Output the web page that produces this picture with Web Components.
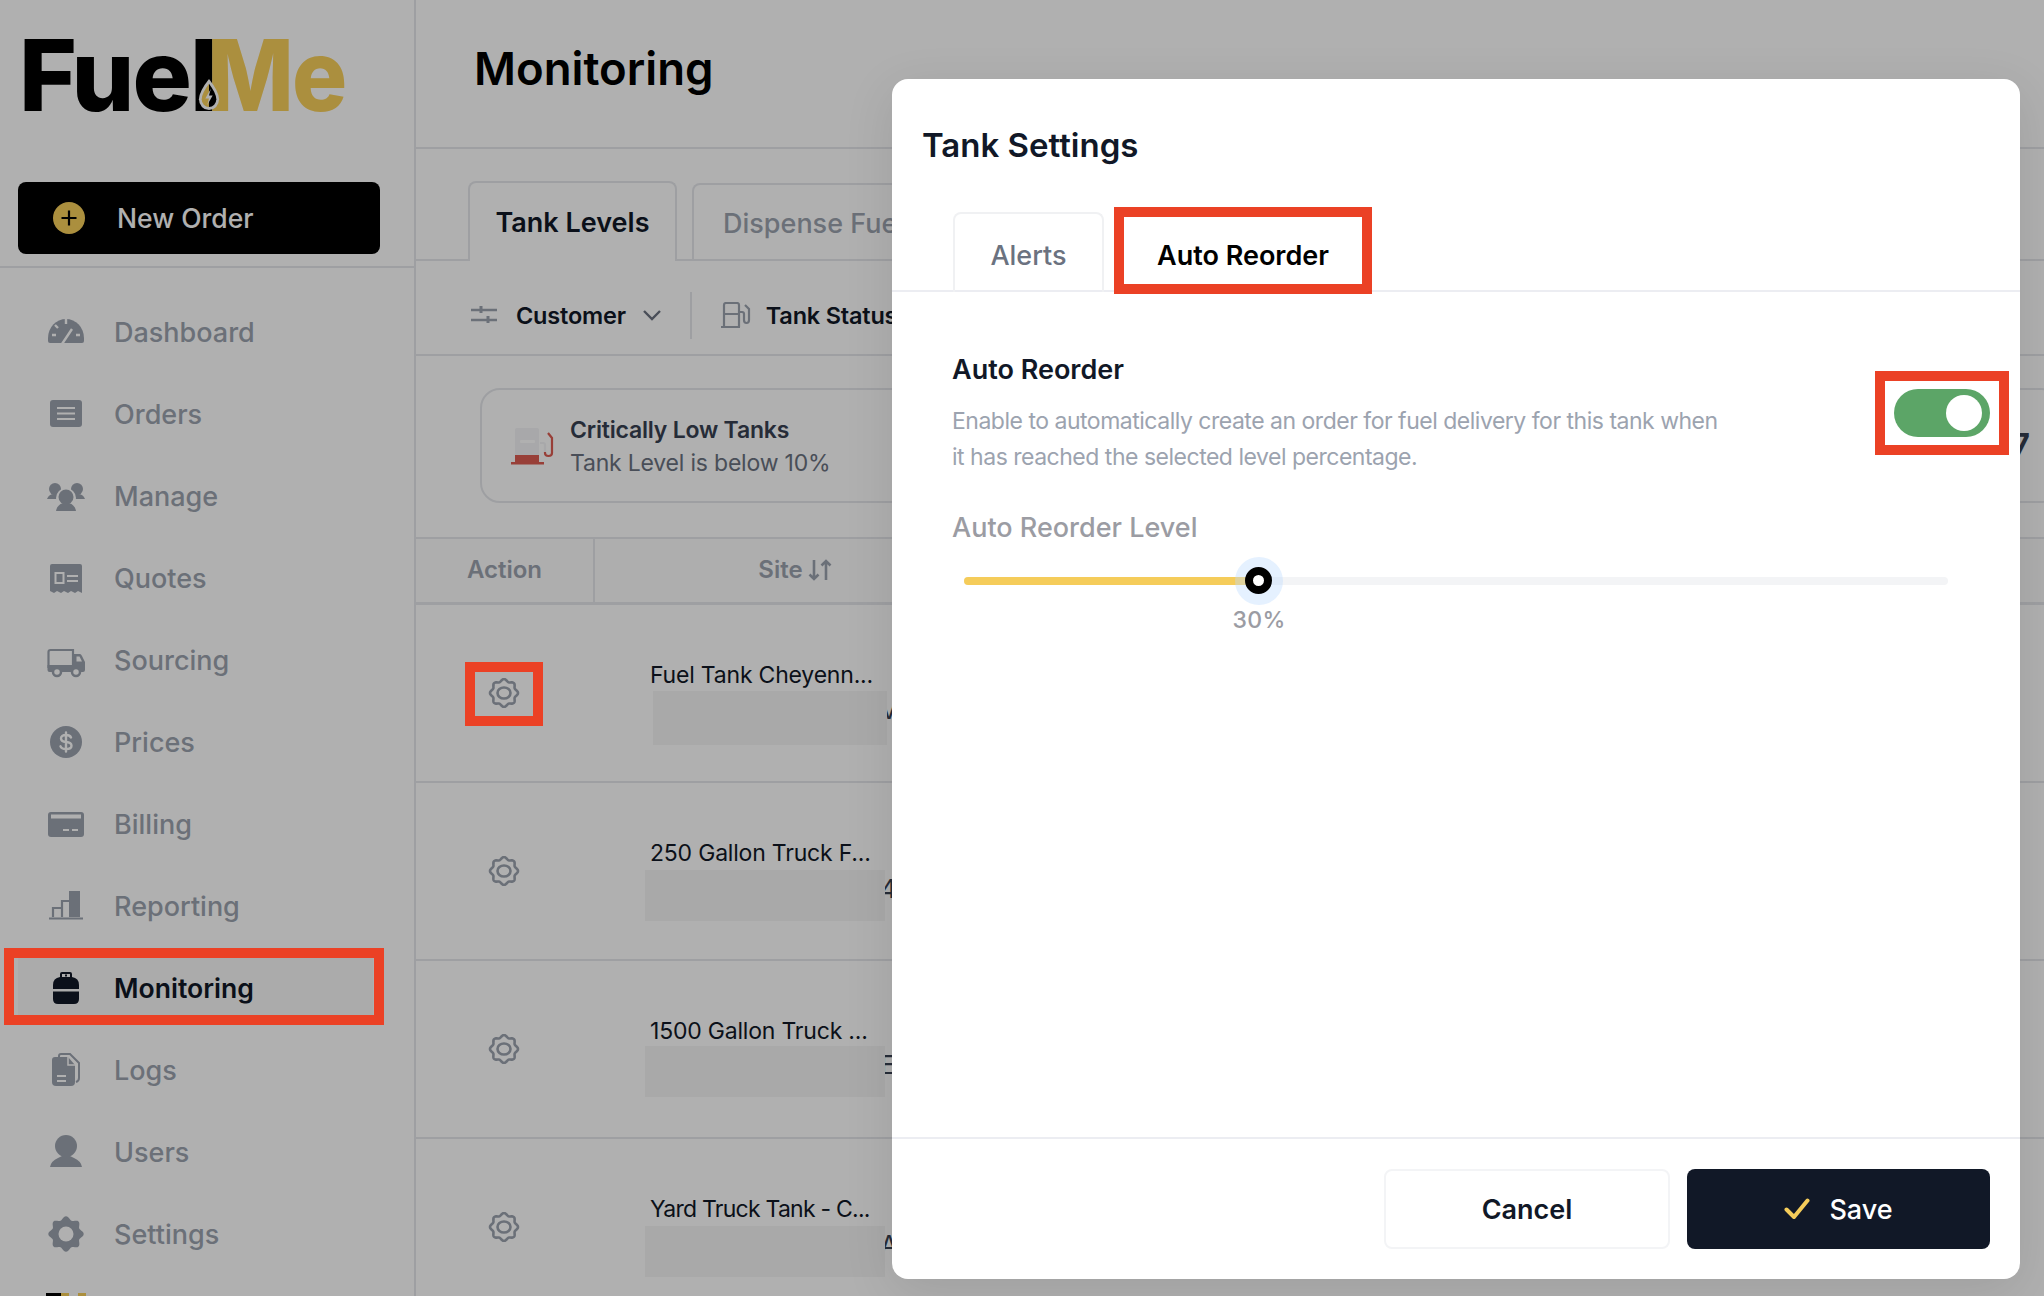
<!DOCTYPE html>
<html lang="en">
<head>
<meta charset="utf-8">
<title>Tank Settings</title>
<style>
    html, body { margin: 0; padding: 0; background: #fff; }
    body { font-family: Inter, "Liberation Sans", sans-serif; color: #111827; }
</style>
</head>
<body>
<fuel-app>
    <side-bar slot="side">
        <nav-item icon="dashboard">Dashboard</nav-item>
        <nav-item icon="orders">Orders</nav-item>
        <nav-item icon="manage">Manage</nav-item>
        <nav-item icon="quotes">Quotes</nav-item>
        <nav-item icon="sourcing">Sourcing</nav-item>
        <nav-item icon="prices">Prices</nav-item>
        <nav-item icon="billing">Billing</nav-item>
        <nav-item icon="reporting">Reporting</nav-item>
        <nav-item icon="monitoring" active>Monitoring</nav-item>
        <nav-item icon="logs">Logs</nav-item>
        <nav-item icon="users">Users</nav-item>
        <nav-item icon="settings">Settings</nav-item>
    </side-bar>

    <monitoring-page slot="main">
        <tank-row name="Fuel Tank Cheyenn..." peek="V" box-left="58" box-top="0" box-height="54" box-width="234"></tank-row>
        <tank-row name="250 Gallon Truck F..." peek="4" box-left="50" box-top="1" box-height="51" box-width="240"></tank-row>
        <tank-row name="1500 Gallon Truck ..." peek="E" box-left="50" box-top="-1" box-height="51" box-width="240"></tank-row>
        <tank-row name="Yard Truck Tank - C..." peek="A" tight box-left="50" box-top="1" box-height="51" box-width="240"></tank-row>
    </monitoring-page>

    <tank-settings slot="modal">
        <toggle-switch slot="toggle"></toggle-switch>
        <level-slider slot="slider" value="30"></level-slider>
    </tank-settings>

    <mark-box slot="marks" x="4" y="948" w="380" h="77"></mark-box>
    <mark-box slot="marks" x="465" y="662" w="78" h="64"></mark-box>
    <mark-box slot="marks" x="1114" y="207" w="258" h="87"></mark-box>
    <mark-box slot="marks" x="1875" y="371" w="134" h="84"></mark-box>
</fuel-app>

<script>
    // gear outline with wavy edge, the same shape is used in the table and in the nav
    function flowerPath(cx, cy, r, amp, lobes) {
        let d = '';
        for (let i = 0; i < 96; i++) {
            const t = i / 96 * Math.PI * 2;
            const rad = r + amp * Math.cos(lobes * t);
            d += (i ? 'L' : 'M') + (cx + rad * Math.cos(t)).toFixed(2) + ' ' + (cy + rad * Math.sin(t)).toFixed(2);
        }
        return d + 'Z';
    }

    // all nav icons sit in a 40x40 box, --cut is the colour of the row behind them
    const ICONS = {
        dashboard: `<path fill="currentColor" d="M2 26a18 19 0 0 1 36 0v3q0 2-2 2H4q-2 0-2-2z"/>
            <path stroke="var(--cut)" stroke-width="2.4" fill="none" d="M16 32l10-15M20 7v5M6 23h4M30 23h4M9 13l3 3"/>`,
        orders: `<rect x="4" y="6" width="32" height="27" rx="3" fill="currentColor"/>
            <path stroke="var(--cut)" stroke-width="2" d="M11 14h18M11 19.500h18M11 25h18"/>`,
        manage: `<g fill="currentColor">
            <circle cx="9" cy="13" r="6"/><circle cx="31" cy="13" r="6"/>
            <path d="M1 23q2-5 7-5h5v5zM39 23q-2-5-7-5h-5v5z"/></g>
            <circle cx="20" cy="22" r="10" fill="var(--cut)"/>
            <circle cx="20" cy="21" r="7.500" fill="currentColor"/>
            <path fill="currentColor" d="M10 35q1-6 7-8h6q6 2 7 8z"/>`,
        quotes: `<path fill="currentColor" d="M4 8q0-2 2-2h28q2 0 2 2v27l-4-2-3 2-4-2-3 2-4-2-3 2-4-2-3 2-4-2z"/>
            <rect x="9.500" y="15" width="8" height="10" fill="none" stroke="var(--cut)" stroke-width="2"/>
            <path stroke="var(--cut)" stroke-width="2" d="M21 18h11M21 23h11"/>`,
        sourcing: `<path fill="none" stroke="currentColor" stroke-width="2.200" d="M2.500 28V12q0-2 2-2H27v18"/>
            <path fill="currentColor" d="M1.500 25H39v5q0 2-2 2H3.500q-2 0-2-2zM28 14h6q1 0 2 2l3 6v4H28zM8 25"/>
            <path fill="var(--cut)" d="M30.500 16.500h3l2.500 5h-5.500z"/>
            <circle cx="11" cy="32" r="4" fill="var(--cut)" stroke="currentColor" stroke-width="2.500"/>
            <circle cx="30" cy="32" r="4" fill="var(--cut)" stroke="currentColor" stroke-width="2.500"/>`,
        prices: `<circle cx="20" cy="20" r="16" fill="currentColor"/>
            <path fill="none" stroke="var(--cut)" stroke-width="2.400" stroke-linecap="round" d="M25 15.500q-1-2.500-5-2.500-5 0-5 3.500 0 3 5 3.500 5.500.5 5.500 3.700 0 3.300-5.500 3.300-4.500 0-5.500-2.700M20 10.500v19"/>`,
        billing: `<rect x="2" y="8" width="36" height="25" rx="3" fill="currentColor"/>
            <rect x="5" y="10.500" width="30" height="4" fill="var(--cut)"/>
            <path stroke="var(--cut)" stroke-width="2" d="M17 26h6M26 26h6"/>`,
        reporting: `<rect x="23" y="5" width="11" height="26" fill="currentColor"/>
            <path fill="none" stroke="currentColor" stroke-width="2.200" d="M16 31V15h7M7 31V22h9M3 32.500h34"/>`,
        monitoring: `<path fill="currentColor" d="M7 17q0-7 7-8V6q0-2 2-2h8q2 0 2 2v3q7 1 7 8v14q0 5-5 5H12q-5 0-5-5z"/>
            <path fill="var(--cut)" d="M7 21h26v2.500H7zM16 6h8v3h-8z"/><path fill="currentColor" d="M19 6.500h2v2h-2z"/>`,
        logs: `<path fill="none" stroke="currentColor" stroke-width="2" d="M13 7V6q0-2 2-2h9l9 9v15q0 3-3 4"/>
            <path fill="currentColor" d="M9 7h13l7 8v17q0 4-4 4H10q-4 0-4-4V10q0-3 3-3z"/>
            <path stroke="var(--cut)" stroke-width="2" d="M11 26h9M11 31h9"/>
            <path fill="none" stroke="var(--cut)" stroke-width="1.500" d="M22 7v8h7"/>`,
        users: `<circle cx="20" cy="14" r="11" fill="currentColor"/>
            <path fill="currentColor" d="M4 35q1-6 8-9l4-2h8l4 2q7 3 8 9z"/>`,
        settings: `<path fill="currentColor" d="${flowerPath(20, 20, 16, 1.700, 8)}"/>
            <circle cx="20" cy="20" r="7.500" fill="var(--cut)"/>`
    };

    class FuelApp extends HTMLElement {
        constructor() {
            super();
            this.attachShadow({mode: "open"});
            this.shadowRoot.innerHTML = `
                <style>
                    :host {
                        display: flex;
                        position: relative;
                        width: 2044px;
                        height: 1296px;
                        overflow: hidden;
                        background: #fff;
                    }
                    .scrim {
                        position: absolute;
                        inset: 0;
                        background: rgba(0, 0, 0, .31);
                    }
                </style>
                <slot name="side"></slot>
                <slot name="main"></slot>
                <div class="scrim"></div>
                <slot name="modal"></slot>
                <slot name="marks"></slot>
            `;
        }
    }

    class SideBar extends HTMLElement {
        constructor() {
            super();
            this.attachShadow({mode: "open"});
            this.shadowRoot.innerHTML = `
                <style>
                    :host {
                        display: block;
                        box-sizing: border-box;
                        flex: 0 0 416px;
                        height: 1296px;
                        overflow: hidden;
                        border-right: 2px solid #e5e7eb;
                    }
                    .logo {
                        position: relative;
                        height: 182px;
                        box-sizing: border-box;
                        padding: 15px 0 0 19px;
                        font-size: 99px;
                        line-height: 120px;
                        font-weight: 800;
                        letter-spacing: -2px;
                        white-space: nowrap;
                        color: #000;
                    }
                    .logo b {
                        display: inline-block;
                        margin-left: -9px;
                        font-weight: 800;
                        color: #f8cf5b;
                        transform: scaleX(.93);
                        transform-origin: left center;
                    }
                    .drop { position: absolute; left: 198px; top: 79px; }
                    .new {
                        display: flex;
                        align-items: center;
                        height: 72px;
                        margin: 0 34px 0 18px;
                        padding-left: 35px;
                        border-radius: 8px;
                        background: #000;
                        color: #fff;
                        font-size: 26.500px;
                        font-weight: 500;
                    }
                    .new svg { margin-right: 32px; }
                    hr {
                        height: 2px;
                        margin: 12px 0 0;
                        border: 0;
                        background: #e5e7eb;
                    }
                    nav {
                        display: flex;
                        flex-direction: column;
                        gap: 10px;
                        padding-top: 28px;
                    }
                    .mini { display: block; margin: 23px 0 0 46px; }
                </style>
                <div class="logo">Fuel<b>Me</b>
                    <svg class="drop" width="22" height="32" viewBox="0 0 24 33" preserveAspectRatio="none">
                        <path fill="#fff" d="M12 0q11 13 11 21a11 11 0 0 1-22 0q0-8 11-21z"/>
                        <path fill="#f8cf5b" d="M12 5q-8 10-8 16a8 8 0 0 0 8 8z"/>
                        <path fill="#000" d="M12 5q8 10 8 16a8 8 0 0 1-8 8z"/>
                        <path fill="#fff" d="M14 10l-6 10h4l-2 7 6-10h-4z"/>
                    </svg>
                </div>
                <div class="new">
                    <svg width="32" height="32" viewBox="0 0 32 32">
                        <circle cx="16" cy="16" r="16" fill="#f8cf5b"/>
                        <path stroke="#000" stroke-width="2.200" d="M16 8.500v15M8.500 16h15"/>
                    </svg>
                    New Order
                </div>
                <hr>
                <nav><slot></slot></nav>
                <svg class="mini" width="40" height="10">
                    <rect width="15" height="10" fill="#000"/>
                    <path fill="#f8cf5b" d="M15 0h8v10h-8zM32 0h8v10h-8z"/>
                </svg>
            `;
        }
    }

    class NavItem extends HTMLElement {
        constructor() {
            super();
            this.attachShadow({mode: "open"});
            this.shadowRoot.innerHTML = `
                <style>
                    :host {
                        display: flex;
                        align-items: center;
                        gap: 28px;
                        height: 72px;
                        margin: 0 41px 0 18px;
                        padding-left: 28px;
                        border-radius: 8px;
                        color: #9ca3af;
                        font-size: 27px;
                        font-weight: 500;
                        --cut: #fff;
                    }
                    :host([active]) {
                        background: #f8f8f8;
                        color: #111827;
                        font-weight: 600;
                        font-size: 26.600px;
                        --cut: #f8f8f8;
                    }
                    svg { flex: none; }
                </style>
                <svg width="40" height="40" viewBox="0 0 40 40">${ICONS[this.getAttribute('icon')] || ''}</svg>
                <slot></slot>
            `;
        }
    }

    class MonitoringPage extends HTMLElement {
        constructor() {
            super();
            this.attachShadow({mode: "open"});
            this.shadowRoot.innerHTML = `
                <style>
                    :host {
                        display: block;
                        flex: 1;
                        min-width: 0;
                        overflow: hidden;
                    }
                    .title {
                        box-sizing: border-box;
                        height: 149px;
                        padding: 41px 0 0 58px;
                        border-bottom: 2px solid #e5e7eb;
                        font-size: 45.500px;
                        line-height: 56px;
                        font-weight: 600;
                        color: #000;
                    }
                    .tabs {
                        display: flex;
                        align-items: flex-end;
                        gap: 15px;
                        box-sizing: border-box;
                        height: 112px;
                        padding-left: 52px;
                        border-bottom: 2px solid #e5e7eb;
                    }
                    .tab {
                        box-sizing: border-box;
                        display: flex;
                        align-items: center;
                        height: 78px;
                        margin-bottom: -2px;
                        border: 2px solid #e5e7eb;
                        border-bottom: 0;
                        border-radius: 8px 8px 0 0;
                        color: #9ca3af;
                        font-size: 27px;
                        font-weight: 500;
                        white-space: nowrap;
                    }
                    .tab.on {
                        justify-content: center;
                        width: 209px;
                        height: 80px;
                        background: #fff;
                        color: #111827;
                        font-weight: 600;
                    }
                    .tab.off { width: 300px; padding-left: 29px; }
                    .filters {
                        display: flex;
                        align-items: center;
                        box-sizing: border-box;
                        height: 95px;
                        padding: 15px 0 0 55px;
                        border-bottom: 2px solid #e5e7eb;
                        font-size: 23.500px;
                        font-weight: 600;
                        letter-spacing: -.2px;
                        white-space: nowrap;
                    }
                    .filters svg { flex: none; }
                    .sep { width: 2px; height: 47px; margin: 0 29px; background: #e5e7eb; }
                    .cards { box-sizing: border-box; height: 181px; padding: 32px 0 0 64px; }
                    .card {
                        display: flex;
                        align-items: center;
                        box-sizing: border-box;
                        width: 1581px;
                        height: 115px;
                        padding: 0 29px 0 28px;
                        border: 2px solid #e5e7eb;
                        border-radius: 20px;
                    }
                    .card svg { flex: none; margin-right: 16px; }
                    .card p { margin: 0; padding-top: 2px; font-size: 23px; line-height: 33px; letter-spacing: -.2px; color: #6b7280; flex: 1; white-space: nowrap; }
                    .card p b { display: block; font-weight: 600; color: #374151; }
                    .card strong { font-size: 34px; font-weight: 600; color: #374151; }
                    .head {
                        display: grid;
                        grid-template-columns: 179px 400px;
                        box-sizing: border-box;
                        height: 68px;
                        border-top: 2px solid #e5e7eb;
                        border-bottom: 3px solid #e5e7eb;
                        background: #fcfcfc;
                        color: #9ca3af;
                        font-size: 24px;
                        font-weight: 600;
                    }
                    .head div {
                        display: flex;
                        align-items: center;
                        justify-content: center;
                        gap: 5px;
                        padding-bottom: 2px;
                    }
                    .head div:first-child { border-right: 2px solid #e5e7eb; }
                </style>
                <div class="title">Monitoring</div>
                <div class="tabs">
                    <div class="tab on">Tank Levels</div>
                    <div class="tab off">Dispense Fuel</div>
                </div>
                <div class="filters">
                    <svg width="26" height="20" viewBox="0 0 26 20" fill="none" stroke="#9ca3af" stroke-width="2.400">
                        <path d="M0 5h26M0 15h26"/><path stroke-width="3" d="M10 1v7M17 11v7"/>
                    </svg>
                    <span style="margin-left:19px">Customer</span>
                    <svg style="margin-left:17px" width="18" height="12" viewBox="0 0 18 12" fill="none" stroke="#6b7280" stroke-width="2.400">
                        <path d="M1 2l8 8 8-8"/>
                    </svg>
                    <div class="sep"></div>
                    <svg width="30" height="26" viewBox="0 0 30 26" fill="none" stroke="#9ca3af" stroke-width="2.200">
                        <path d="M0 25h19M3 25V3q0-2 2-2h11q2 0 2 2v22M3 12h15M24 3l4 4v11q0 3-2.500 3T23 18V12q0-2-2-2h-3"/>
                    </svg>
                    <span style="margin-left:15px">Tank Status</span>
                </div>
                <div class="cards">
                    <div class="card">
                        <svg width="44" height="38" viewBox="0 0 44 38">
                            <path fill="#f3f4f6" d="M5 3q0-2 2-2h20q2 0 2 2v25H5z"/>
                            <rect x="10" y="13" width="15" height="3" rx="1" fill="#fff"/>
                            <path fill="#dc5c51" d="M5 28h24v8H5zM1 35h33v2.500H1z"/>
                            <path fill="none" stroke="#f3f4f6" stroke-width="2.200" d="M30 16h3q2 0 2 2v7"/>
                            <path fill="none" stroke="#dc5c51" stroke-width="2.200" d="M35 25v1q0 3 3.500 3t3.500-3V11l-4-5"/>
                        </svg>
                        <p><b>Critically Low Tanks</b>Tank Level is below 10%</p>
                        <strong>7</strong>
                    </div>
                </div>
                <div class="head">
                    <div>Action</div>
                    <div>Site
                        <svg width="24" height="24" viewBox="0 0 24 24" fill="none" stroke="#9ca3af" stroke-width="2.600">
                            <path d="M6 2v19M1.500 16.500L6 21l4.500-4.500M18 22V3M13.500 7.500L18 3l4.500 4.500"/>
                        </svg>
                    </div>
                </div>
                <slot></slot>
            `;
        }
    }

    class TankRow extends HTMLElement {
        constructor() {
            super();
            this.attachShadow({mode: "open"});
            const g = (n) => this.getAttribute(n);
            this.shadowRoot.innerHTML = `
                <style>
                    :host {
                        display: grid;
                        grid-template-columns: 179px 1fr;
                        box-sizing: border-box;
                        height: 178px;
                        border-bottom: 2px solid #e5e7eb;
                    }
                    .act { display: flex; align-items: center; justify-content: center; padding-right: 3px; }
                    .site {
                        position: relative;
                        padding: 55px 0 0 55px;
                        font-size: 23px;
                        line-height: 30px;
                        letter-spacing: -.2px;
                        white-space: nowrap;
                        color: #111827;
                    }
                    :host([tight]) .site { letter-spacing: -.75px; }
                    .peek {
                        position: absolute;
                        left: 285px;
                        top: calc(90px + ${g('box-top')}px);
                        font-size: 26px;
                        color: #374151;
                    }
                    .box {
                        position: absolute;
                        left: ${g('box-left')}px;
                        top: calc(86px + ${g('box-top')}px);
                        width: ${g('box-width')}px;
                        height: ${g('box-height')}px;
                        background: #f5f5f5;
                    }
                </style>
                <div class="act">
                    <svg width="32" height="30" viewBox="0 0 32 30" fill="none" stroke="#9ca3af" stroke-width="2.600">
                        <path d="${flowerPath(16, 15, 12.800, 1.200, 8)}"/>
                        <ellipse cx="16" cy="15" rx="6.500" ry="5.500"/>
                    </svg>
                </div>
                <div class="site">
                    <span>${g('name')}</span>
                    <span class="peek">${g('peek')}</span>
                    <div class="box"></div>
                </div>
            `;
        }
    }

    class TankSettings extends HTMLElement {
        constructor() {
            super();
            this.attachShadow({mode: "open"});
            this.shadowRoot.innerHTML = `
                <style>
                    :host {
                        position: absolute;
                        left: 892px;
                        top: 79px;
                        display: flex;
                        flex-direction: column;
                        box-sizing: border-box;
                        width: 1128px;
                        height: 1200px;
                        border-radius: 16px;
                        background: #fff;
                        box-shadow: 0 12px 50px rgba(0, 0, 0, .1);
                    }
                    h2 {
                        box-sizing: border-box;
                        height: 133px;
                        margin: 0;
                        padding: 46px 0 0 30px;
                        font-size: 33px;
                        line-height: 40px;
                        font-weight: 600;
                        color: #111827;
                    }
                    .tabs {
                        display: flex;
                        align-items: flex-end;
                        gap: 12px;
                        box-sizing: border-box;
                        height: 80px;
                        padding-left: 61px;
                        border-bottom: 2px solid #ecedf2;
                    }
                    .tab {
                        display: flex;
                        align-items: center;
                        justify-content: center;
                        box-sizing: border-box;
                        height: 80px;
                        margin-bottom: -2px;
                        padding-top: 5px;
                        border: 2px solid #f0f1f3;
                        border-bottom: 0;
                        border-radius: 8px 8px 0 0;
                        font-size: 27px;
                        font-weight: 500;
                        color: #6b7280;
                    }
                    .tab.alerts { width: 151px; }
                    .tab.on { width: 254px; background: #fff; color: #000; font-weight: 600; }
                    .body { flex: 1; padding: 60px 30px 0 60px; }
                    .row { display: flex; align-items: center; justify-content: space-between; }
                    h3 { margin: 0 0 15px; font-size: 27px; line-height: 36px; font-weight: 600; color: #111827; }
                    p { margin: 0; width: 775px; font-size: 23px; line-height: 36px; letter-spacing: -.49px; color: #9ca3af; }
                    .label {
                        margin-top: 35px;
                        font-size: 27px;
                        line-height: 36px;
                        font-weight: 500;
                        color: #9b9ca3;
                    }
                    footer {
                        display: flex;
                        justify-content: flex-end;
                        gap: 17px;
                        box-sizing: border-box;
                        height: 142px;
                        padding: 30px 30px 0 0;
                        border-top: 2px solid #ecedf2;
                    }
                    .btn {
                        display: flex;
                        align-items: center;
                        justify-content: center;
                        box-sizing: border-box;
                        height: 80px;
                        border-radius: 8px;
                        font-size: 27px;
                    }
                    .cancel { width: 286px; border: 2px solid #f3f4f6; font-weight: 600; color: #111827; }
                    .save { width: 303px; gap: 19px; background: #111827; color: #fff; font-weight: 500; }
                </style>
                <h2>Tank Settings</h2>
                <div class="tabs">
                    <div class="tab alerts">Alerts</div>
                    <div class="tab on">Auto Reorder</div>
                </div>
                <div class="body">
                    <div class="row">
                        <div>
                            <h3>Auto Reorder</h3>
                            <p>Enable to automatically create an order for fuel delivery for this tank when it has reached the selected level percentage.</p>
                        </div>
                        <slot name="toggle"></slot>
                    </div>
                    <div class="label">Auto Reorder Level</div>
                    <slot name="slider"></slot>
                </div>
                <footer>
                    <div class="btn cancel">Cancel</div>
                    <div class="btn save">
                        <svg width="26" height="22" viewBox="0 0 26 22" fill="none" stroke="#f5cc5a" stroke-width="4" stroke-linecap="round" stroke-linejoin="round">
                            <path d="M2.500 11.500L10 19 23.500 2.500"/>
                        </svg>
                        Save
                    </div>
                </footer>
            `;
        }
    }

    class ToggleSwitch extends HTMLElement {
        constructor() {
            super();
            this.attachShadow({mode: "open"});
            this.shadowRoot.innerHTML = `
                <style>
                    :host {
                        display: flex;
                        align-items: center;
                        justify-content: flex-end;
                        box-sizing: border-box;
                        width: 96px;
                        height: 48px;
                        margin-top: -1px;
                        padding-right: 8px;
                        border-radius: 24px;
                        background: #5ca567;
                    }
                    i { width: 36px; height: 36px; border-radius: 50%; background: #fff; }
                </style>
                <i></i>
            `;
        }
    }

    class LevelSlider extends HTMLElement {
        constructor() {
            super();
            this.attachShadow({mode: "open"});
            const value = this.getAttribute('value');
            this.shadowRoot.innerHTML = `
                <style>
                    :host {
                        display: block;
                        position: relative;
                        height: 80px;
                        margin: 11px 42px 0 12px;
                    }
                    .track { position: absolute; left: 0; right: 0; top: 20px; height: 8px; border-radius: 4px; background: #f3f4f6; }
                    .fill { height: 100%; width: ${value}%; border-radius: 4px; background: #f5cc5a; }
                    .thumb { position: absolute; left: ${value}%; top: 0; width: 48px; height: 48px; margin-left: -24px; border-radius: 50%; background: rgba(191, 219, 254, .4); }
                    .thumb::after { content: ""; position: absolute; left: 10px; top: 10px; width: 11px; height: 11px; border: 8.500px solid #000; border-radius: 50%; background: #fff; }
                    .val { position: absolute; left: ${value}%; top: 47px; transform: translateX(-50%); font-size: 23px; font-weight: 500; line-height: 32px; color: #9b9ca3; letter-spacing: .4px; }
                </style>
                <div class="track"><div class="fill"></div></div>
                <div class="thumb"></div>
                <div class="val">${value}%</div>
            `;
        }
    }

    // the red annotation rectangles drawn on top of the screenshot
    class MarkBox extends HTMLElement {
        constructor() {
            super();
            this.attachShadow({mode: "open"});
            const g = (n) => this.getAttribute(n);
            this.shadowRoot.innerHTML = `
                <style>
                    :host {
                        position: absolute;
                        left: ${g('x')}px;
                        top: ${g('y')}px;
                        width: ${g('w')}px;
                        height: ${g('h')}px;
                        box-sizing: border-box;
                        border: 10px solid #eb4125;
                    }
                </style>
            `;
        }
    }

    customElements.define('fuel-app', FuelApp);
    customElements.define('side-bar', SideBar);
    customElements.define('nav-item', NavItem);
    customElements.define('monitoring-page', MonitoringPage);
    customElements.define('tank-row', TankRow);
    customElements.define('tank-settings', TankSettings);
    customElements.define('toggle-switch', ToggleSwitch);
    customElements.define('level-slider', LevelSlider);
    customElements.define('mark-box', MarkBox);
</script>
</body>
</html>
